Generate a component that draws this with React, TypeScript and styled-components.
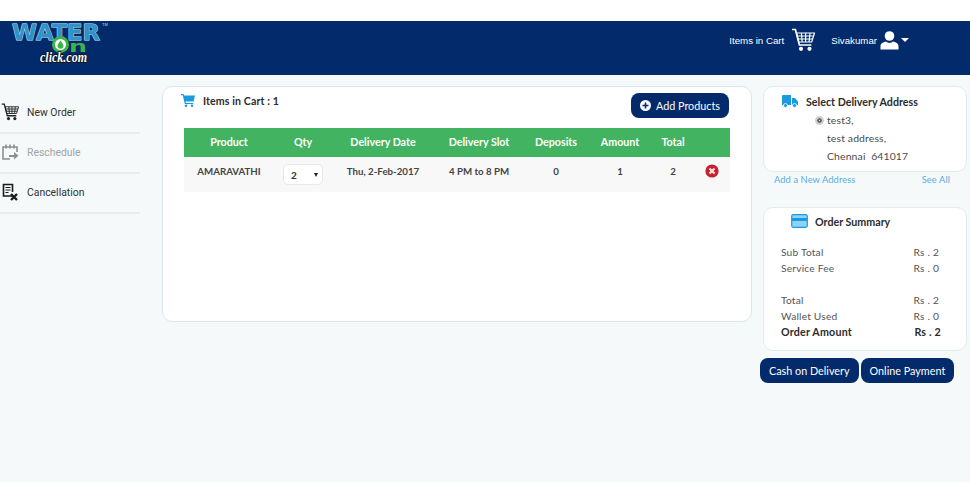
import { createGlobalStyle, styled } from "styled-components";

const GlobalStyle = createGlobalStyle`
  html, body { margin: 0; padding: 0; background: #fff; }
  body { font-family: Lato, "Open Sans", sans-serif; }
`;

const NAVY = "#032b6b";
const BLUE = "#1c9ae0";

const Page = styled.div`
  width: 970px;
  height: 496px;
  padding-top: 21px;
  box-sizing: border-box;
  overflow: hidden;
  display: flex;
  flex-direction: column;
`;

const Header = styled.header`
  height: 54px;
  flex: none;
  background: ${NAVY};
  display: flex;
  justify-content: space-between;
  color: #fff;
`;

const LogoBox = styled.div`
  width: 110px;
  height: 46px;
  margin-left: 9px;
`;

const HeaderRight = styled.div`
  display: flex;
  align-items: center;
  height: 38px;
  padding-right: 61px;
  font-family: "Liberation Sans", Arial, sans-serif;
  font-size: 9.7px;
`;

const CartLabel = styled.span`
  margin-right: 7px;
`;

const UserName = styled.span`
  margin: 0 3px 0 16px;
`;

const Body = styled.div`
  height: 407px;
  flex: none;
  background: #f5f9f9;
  display: flex;
  align-items: flex-start;
`;

const Sidebar = styled.nav`
  width: 140px;
  flex: none;
  margin-top: 19px;
`;

const NavItem = styled.div<{ $muted?: boolean }>`
  height: 40px;
  box-sizing: border-box;
  border-bottom: 2px solid #eaedef;
  padding: 0 0 2px 1px;
  display: flex;
  align-items: center;
  gap: 8px;
  font-family: Roboto, sans-serif;
  font-size: 10.4px;
  color: ${({ $muted }) => ($muted ? "#a2a4a6" : "#2f3133")};
  svg { flex: none; }
`;

const CartCard = styled.section`
  width: 590px;
  height: 236px;
  box-sizing: border-box;
  flex: none;
  margin: 11px 0 0 22px;
  background: #fff;
  border: 1px solid #d9e6ee;
  border-radius: 10px;
  padding: 6px 21px 0;
`;

const CardTop = styled.div`
  height: 35px;
  display: flex;
  align-items: flex-start;
  justify-content: space-between;
  padding-right: 1px;
`;

const CartTitle = styled.div`
  display: flex;
  align-items: center;
  gap: 8px;
  margin: 1px 0 0 -3px;
  font-size: 10.6px;
  font-weight: 700;
  color: #2c2c2c;
  letter-spacing: 0.1px;
`;

const NavyButton = styled.button`
  border: 0;
  background: ${NAVY};
  color: #fff;
  font-family: Lato, sans-serif;
  font-size: 10.8px;
  border-radius: 8px;
  height: 25px;
  display: inline-flex;
  align-items: center;
  justify-content: center;
  gap: 5px;
  padding: 0 9px;
`;

const Table = styled.div`
  width: 546px;
`;

const Row = styled.div<{ $head?: boolean }>`
  display: grid;
  grid-template-columns: 90px 58px 102px 90px 64px 64px 42px 36px;
  align-items: center;
  justify-items: center;
  background: ${({ $head }) => ($head ? "#42b360" : "#f8f8f8")};
  color: ${({ $head }) => ($head ? "#fff" : "#444")};
  height: ${({ $head }) => ($head ? "29px" : "35px")};
  font-size: ${({ $head }) => ($head ? "10.7px" : "9.7px")};
  font-weight: 700;
`;

const HeadCell = styled.span`
  margin-bottom: 2px;
`;

const BodyCell = styled.span`
  margin-bottom: 8px;
`;

const RemoveSlot = styled.span`
  display: flex;
  margin-bottom: 7px;
`;

const QtyBox = styled.div`
  width: 40px;
  height: 21px;
  box-sizing: border-box;
  background: #fff;
  border: 1px solid #e8e8e8;
  border-radius: 5px;
  display: flex;
  align-items: center;
  justify-content: space-between;
  padding: 0 4px 0 7px;
  color: #333;
  font-size: 10px;
  font-weight: 700;
`;

const Caret = styled.span`
  width: 0;
  height: 0;
  border-left: 2.5px solid transparent;
  border-right: 2.5px solid transparent;
  border-top: 4px solid #222;
`;

const SideColumn = styled.aside`
  width: 204px;
  flex: none;
  margin: 11px 0 0 11px;
`;

const SideCard = styled.section<{ $height: number }>`
  height: ${({ $height }) => $height}px;
  box-sizing: border-box;
  background: #fff;
  border: 1px solid #e2ebf0;
  border-radius: 10px;
  color: #4a4a4a;
  font-size: 10.4px;
`;

const SideTitle = styled.div<{ $indent: number }>`
  display: flex;
  align-items: center;
  gap: 8px;
  padding-left: ${({ $indent }) => $indent}px;
  font-size: 10.7px;
  font-weight: 700;
  color: #2c2c2c;
`;

const AddressTitle = styled(SideTitle)`
  height: 29px;
  margin-bottom: -5px;
`;

const AddressLines = styled.div`
  padding-left: 63px;
  line-height: 18px;
  position: relative;
  letter-spacing: 0.15px;
`;

const AddressLine = styled.div`
  height: 18px;
`;

const Radio = styled.span`
  position: absolute;
  left: 51px;
  top: 5px;
  width: 9px;
  height: 9px;
  box-sizing: border-box;
  border-radius: 50%;
  background: #fff;
  border: 2.5px solid #cfcfcf;
  box-shadow: inset 0 0 0 2px #666;
`;

const LinkRow = styled.div`
  display: flex;
  justify-content: space-between;
  height: 33px;
  padding: 2px 17px 0 11px;
  font-size: 9.3px;
  color: #58ace6;
  letter-spacing: 0.1px;
`;

const SummaryTitle = styled(SideTitle)`
  height: 26px;
  margin-bottom: 10px;
  gap: 7px;
`;

const SummaryRow = styled.div<{ $strong?: boolean }>`
  display: flex;
  justify-content: space-between;
  height: 16px;
  line-height: 16px;
  padding: 0 ${({ $strong }) => ($strong ? "25px" : "27px")} 0 17px;
  font-size: ${({ $strong }) => ($strong ? "10.7px" : "10.2px")};
  font-weight: ${({ $strong }) => ($strong ? 700 : 400)};
  color: ${({ $strong }) => ($strong ? "#2c2c2c" : "#555")};
  letter-spacing: 0.2px;
`;

const SummaryGap = styled.div`
  height: 16px;
`;

const PayRow = styled.div`
  display: flex;
  gap: 2px;
  margin: 7px 0 0 -3px;
`;

const CartOutlineIcon = ({ size, color }: { size: number; color: string }) => (
  <svg width={size} height={size} viewBox="0 0 24 24" fill="none" stroke={color} strokeWidth="1.2">
    <path d="M1 1.5h3.4l4 15.5h12" strokeWidth="1.7" />
    <path d="M5.4 5H23.5l-2.8 9H7.8z" />
    <path d="M6.2 8h16.4M7 11h14.6M10.4 5l.8 9M14.6 5v9M19 5l-.9 9" />
    <circle cx="10" cy="20.8" r="2.1" fill={color} stroke="none" />
    <circle cx="18.5" cy="20.8" r="2.1" fill={color} stroke="none" />
  </svg>
);

const UserIcon = () => (
  <svg width="19" height="19" viewBox="0 0 19 19" fill="#fff">
    <circle cx="9.5" cy="5" r="4.8" />
    <path d="M0.5 18.5v-3.2c0-3 3-4.3 5.6-4.8 1 1 2.2 1.4 3.4 1.4s2.4-.4 3.4-1.4c2.6.5 5.6 1.8 5.6 4.8v3.2z" />
  </svg>
);

const HeaderCaret = styled.span`
  margin-left: 2px;
  width: 0;
  height: 0;
  border-left: 4px solid transparent;
  border-right: 4px solid transparent;
  border-top: 4px solid #fff;
`;

const Logo = () => (
  <svg width="110" height="46" viewBox="0 0 110 46">
    <text x="3" y="19" fontFamily="'DejaVu Sans', sans-serif" fontWeight="700" fontSize="22" textLength="88" lengthAdjust="spacingAndGlyphs" fill="#2f93c8" stroke="#cfeaf5" strokeWidth="0.9" paintOrder="stroke">WATER</text>
    <text x="93" y="5" fontFamily="'Liberation Sans', sans-serif" fontSize="4" fill="#cfd8e6">TM</text>
    <circle cx="51.5" cy="23.5" r="7" fill="#fff" stroke="#3fb34a" strokeWidth="3" />
    <path d="M51.5 19.5c-2 2.6-3 4-3 5.3a3 3 0 0 0 6 0c0-1.3-1-2.7-3-5.3z" fill="#3fb34a" />
    <text x="60" y="31" fontFamily="'DejaVu Sans', sans-serif" fontWeight="700" fontSize="16.5" textLength="18" lengthAdjust="spacingAndGlyphs" fill="#3fb34a">n</text>
    <text x="31" y="41" fontFamily="'Liberation Serif', serif" fontStyle="italic" fontWeight="700" fontSize="15" textLength="47" lengthAdjust="spacingAndGlyphs" fill="#fff" stroke="#111" strokeWidth="1.6" paintOrder="stroke">click.com</text>
  </svg>
);

const CalendarIcon = () => (
  <svg width="18" height="18" viewBox="0 0 18 18" fill="none" stroke="#8d8f91" strokeWidth="1.6">
    <path d="M9 16H2V4h14v5" />
    <path d="M5 1.5v4M9 1.5v4M13 1.5v4" />
    <path d="M8 12h5V9l4.5 3.8-4.5 3.7V14H8z" fill="#8d8f91" stroke="none" />
  </svg>
);

const CancelIcon = () => (
  <svg width="18" height="18" viewBox="0 0 18 18" fill="none" stroke="#1a1a1a">
    <path d="M11 13H2.5V1.5h9V9" strokeWidth="1.6" />
    <path d="M4.5 4.5h5M4.5 7h5M4.5 9.5h3" strokeWidth="1.2" />
    <path d="M10 11l6 6M16 11l-6 6" strokeWidth="2.4" />
  </svg>
);

const SolidCartIcon = () => (
  <svg width="14" height="13" viewBox="0 0 14 13" fill={BLUE}>
    <path d="M0 0h2.6l.5 1.6H14l-1.4 6H4.6l.3 1.3h7.4V10H3.8L1.8 1.2H0z" />
    <circle cx="5" cy="11.7" r="1.3" />
    <circle cx="11" cy="11.7" r="1.3" />
  </svg>
);

const PlusCircleIcon = () => (
  <svg width="11" height="11" viewBox="0 0 11 11">
    <circle cx="5.5" cy="5.5" r="5.5" fill="#fff" />
    <path d="M5.5 2.5v6M2.5 5.5h6" stroke={NAVY} strokeWidth="1.6" />
  </svg>
);

const RemoveIcon = () => (
  <svg width="14" height="14" viewBox="0 0 14 14">
    <circle cx="7" cy="7" r="6.6" fill="#c8202f" />
    <path d="M4.5 4.5l5 5M9.5 4.5l-5 5" stroke="#f4e4e4" strokeWidth="2.2" />
  </svg>
);

const TruckIcon = () => (
  <svg width="16" height="13" viewBox="0 0 16 13" fill={BLUE}>
    <path d="M0 1a1 1 0 0 1 1-1h8v10H0z" />
    <path d="M10 3h3l3 3.5V10h-6z" />
    <circle cx="3.5" cy="10.5" r="2" stroke="#fff" strokeWidth="0.8" />
    <circle cx="12.5" cy="10.5" r="2" stroke="#fff" strokeWidth="0.8" />
  </svg>
);

const CardIcon = () => (
  <svg width="17" height="14" viewBox="0 0 17 14">
    <rect x="0.7" y="0.7" width="15.6" height="12.6" rx="1.5" fill="#8fd3f4" stroke={BLUE} strokeWidth="1.2" />
    <rect x="1" y="4" width="15" height="3" fill={BLUE} />
  </svg>
);

const columns = ["Product", "Qty", "Delivery Date", "Delivery Slot", "Deposits", "Amount", "Total"];

const summaryTop = [
  ["Sub Total", "Rs . 2"],
  ["Service Fee", "Rs . 0"],
];

const summaryBottom = [
  ["Total", "Rs . 2"],
  ["Wallet Used", "Rs . 0"],
];

export default function App() {
  return (
    <Page>
      <GlobalStyle />
      <Header>
        <LogoBox>
          <Logo />
        </LogoBox>
        <HeaderRight>
          <CartLabel>Items in Cart</CartLabel>
          <CartOutlineIcon size={24} color="#fff" />
          <UserName>Sivakumar</UserName>
          <UserIcon />
          <HeaderCaret />
        </HeaderRight>
      </Header>
      <Body>
        <Sidebar>
          <NavItem>
            <CartOutlineIcon size={18} color="#222" />
            New Order
          </NavItem>
          <NavItem $muted>
            <CalendarIcon />
            Reschedule
          </NavItem>
          <NavItem>
            <CancelIcon />
            Cancellation
          </NavItem>
        </Sidebar>
        <CartCard>
          <CardTop>
            <CartTitle>
              <SolidCartIcon />
              Items in Cart : 1
            </CartTitle>
            <NavyButton>
              <PlusCircleIcon />
              Add Products
            </NavyButton>
          </CardTop>
          <Table>
            <Row $head>
              {columns.map((c) => (
                <HeadCell key={c}>{c}</HeadCell>
              ))}
            </Row>
            <Row>
              <BodyCell>AMARAVATHI</BodyCell>
              <QtyBox>
                2
                <Caret />
              </QtyBox>
              <BodyCell>Thu, 2-Feb-2017</BodyCell>
              <BodyCell>4 PM to 8 PM</BodyCell>
              <BodyCell>0</BodyCell>
              <BodyCell>1</BodyCell>
              <BodyCell>2</BodyCell>
              <RemoveSlot>
                <RemoveIcon />
              </RemoveSlot>
            </Row>
          </Table>
        </CartCard>
        <SideColumn>
          <SideCard $height={86}>
            <AddressTitle $indent={18}>
              <TruckIcon />
              Select Delivery Address
            </AddressTitle>
            <AddressLines>
              <Radio />
              <AddressLine>test3,</AddressLine>
              <AddressLine>test address,</AddressLine>
              <AddressLine>Chennai&nbsp; 641017</AddressLine>
            </AddressLines>
          </SideCard>
          <LinkRow>
            <span>Add a New Address</span>
            <span>See All</span>
          </LinkRow>
          <SideCard $height={144}>
            <SummaryTitle $indent={27}>
              <CardIcon />
              Order Summary
            </SummaryTitle>
            {summaryTop.map(([k, v]) => (
              <SummaryRow key={k}>
                <span>{k}</span>
                <span>{v}</span>
              </SummaryRow>
            ))}
            <SummaryGap />
            {summaryBottom.map(([k, v]) => (
              <SummaryRow key={k}>
                <span>{k}</span>
                <span>{v}</span>
              </SummaryRow>
            ))}
            <SummaryRow $strong>
              <span>Order Amount</span>
              <span>Rs . 2</span>
            </SummaryRow>
          </SideCard>
          <PayRow>
            <NavyButton>Cash on Delivery</NavyButton>
            <NavyButton>Online Payment</NavyButton>
          </PayRow>
        </SideColumn>
      </Body>
    </Page>
  );
}
